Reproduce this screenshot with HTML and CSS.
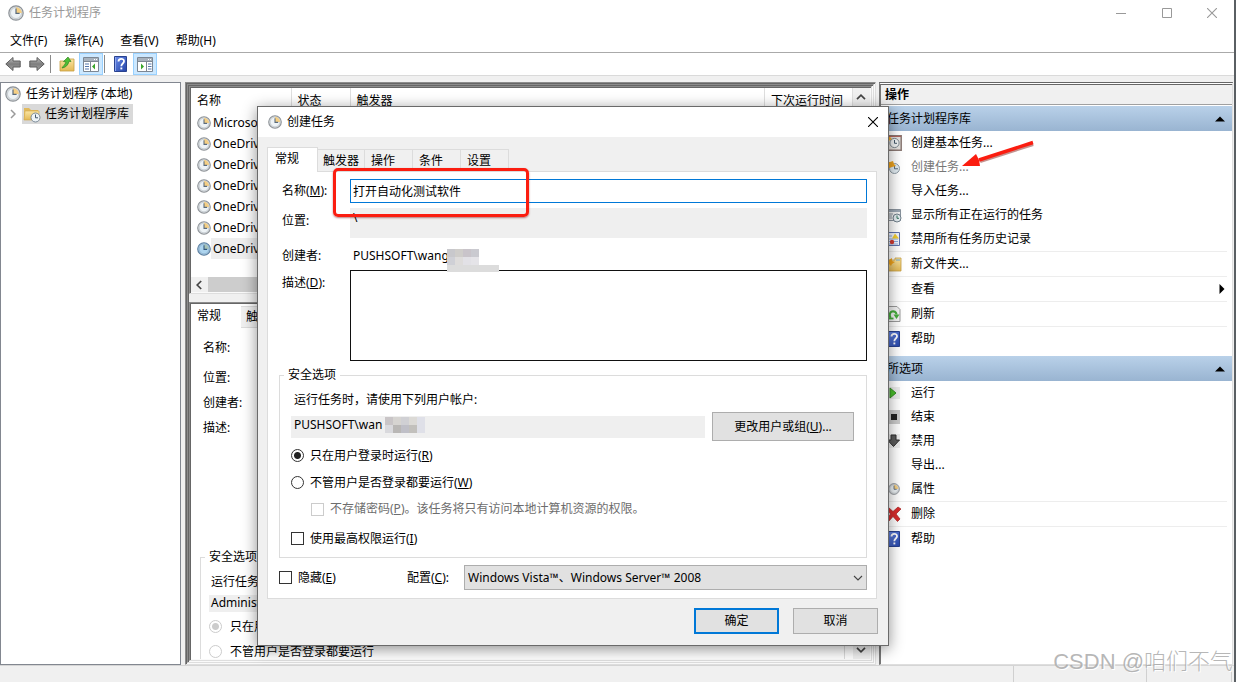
FILE: index.html
```html
<!DOCTYPE html>
<html lang="zh-CN">
<head>
<meta charset="utf-8">
<title>任务计划程序</title>
<link rel="stylesheet" href="styles.css">
</head>
<body>
<svg class="defs" aria-hidden="true">
  <defs>
    <linearGradient id="metal" x1="0" y1="0" x2="0" y2="1"><stop offset="0" stop-color="#c4c4c4"/><stop offset=".5" stop-color="#7d7d7d"/><stop offset="1" stop-color="#a8a8a8"/></linearGradient>
    <linearGradient id="gold" x1="0" y1="0" x2="0" y2="1"><stop offset="0" stop-color="#fbe6a4"/><stop offset="1" stop-color="#e3b955"/></linearGradient>
    <linearGradient id="bluebook" x1="0" y1="0" x2="1" y2="1"><stop offset="0" stop-color="#6a8bea"/><stop offset="1" stop-color="#2545a8"/></linearGradient>
    <symbol id="clock" viewBox="0 0 16 16"><circle cx="8" cy="8" r="7.2" fill="#d9dde0" stroke="#8d9297" stroke-width="1.2"/><circle cx="8" cy="8" r="5.5" fill="#eef3f6" stroke="#b3babf" stroke-width=".6"/><path d="M8 8V2.2A5.800 5.800 0 0 1 13.800 8z" fill="#f5cf84"/><path d="M8 3.6V8.4H11.6" fill="none" stroke="#5a6b7c" stroke-width="1.2"/></symbol>
    <symbol id="clock-blue" viewBox="0 0 16 16"><circle cx="8" cy="8" r="7.2" fill="#a6c5df" stroke="#5b7f9f" stroke-width="1.2"/><circle cx="8" cy="8" r="5.5" fill="#add4ee" stroke="#7fa7c6" stroke-width=".6"/><path d="M8 8V2.7A5.3 5.3 0 0 1 13.3 8z" fill="#a9c3b5"/><path d="M8 3.6V8.4H11.6" fill="none" stroke="#31577c" stroke-width="1.2"/></symbol>
    <symbol id="folder-clock" viewBox="0 0 18 18"><path d="M1 3h5l2 2h7v10H1z" fill="#e2bb5f"/><path d="M2 6h14v9H1z" fill="url(#gold)" stroke="#d0a64b" stroke-width=".6"/><circle cx="12.500" cy="12.500" r="4.500" fill="#eef4f8" stroke="#7b8a97"/><path d="M12.500 9.500v3.300h2.500" fill="none" stroke="#45596b"/></symbol>
    <symbol id="arrow" viewBox="0 0 16 16"><path d="M.8 8L8 1.500V5h7.200v6H8v3.500z" fill="url(#metal)" stroke="#5d5d5d"/></symbol>
    <symbol id="folder-up" viewBox="0 0 16 16"><path d="M1 5h6l2-2h6v12H1z" fill="url(#gold)" stroke="#c79e42" stroke-width=".8"/><path d="M3 12c1-2 3-3 4-6L4.500 5.500 9 1l3 4.500-2-.200c-1 4-3 6-7 6.700z" fill="#4fbe36" stroke="#31871f" stroke-width=".7"/></symbol>
    <symbol id="pane-left" viewBox="0 0 16 16"><path d="M.5 1.500h15v14H.5z" fill="#fff" stroke="#7c8794"/><path d="M1 2h14v3H1z" fill="#a8b2bd"/><path d="M1 5.500h14M7.500 6v9" stroke="#7c8794"/><path d="M2 8h4M2 10.500h4M2 13h4" stroke="#5477ac" stroke-width="1.200"/><path d="M12 7.500v6L9 10.500z" fill="#39a62b"/><path d="M11 3.500h1M13 3.500h1" stroke="#fff"/></symbol>
    <symbol id="pane-right" viewBox="0 0 16 16"><path d="M.5 1.500h15v14H.5z" fill="#fff" stroke="#7c8794"/><path d="M1 2h14v3H1z" fill="#a8b2bd"/><path d="M1 5.500h14M9.500 6v9" stroke="#7c8794"/><path d="M11 8h3.500M11 10.500h3.500M11 13h3.500" stroke="#5477ac" stroke-width="1.200"/><path d="M4 7.500v6l3-3z" fill="#39a62b"/><path d="M11 3.500h1M13 3.500h1" stroke="#fff"/></symbol>
    <symbol id="help" viewBox="0 0 16 16"><path d="M1.500.5h12v15h-12z" fill="url(#bluebook)" stroke="#29428f"/><path d="M2.500 1v14" stroke="#8fa8ef"/><path d="M5.500 5.500c0-3.500 5.500-3.500 5.500-.3C11 7.500 8.300 7.500 8.300 10.200" fill="none" stroke="#fff" stroke-width="1.800"/><path d="M7.400 11.500h1.900v1.900H7.400z" fill="#fff"/></symbol>
    <symbol id="basic" viewBox="0 0 16 16"><path d="M.8.8h14.400v14.400H.8z" fill="#e4e1de" stroke="#8b7974" stroke-width="1.500"/><path d="M1 1.500h14" stroke="#b0645c"/><circle cx="8.500" cy="8" r="4.600" fill="#f1f4f5" stroke="#7d8890"/><path d="M8.500 5v3.300h2.500" fill="none" stroke="#45596b"/><path d="M1 2h3l2 2-5 3z" fill="#efac2c"/></symbol>
    <symbol id="new-task" viewBox="0 0 16 16"><circle cx="8.500" cy="9.500" r="5" fill="#e3edf3" stroke="#8d9aa4"/><path d="M8.500 6v3.800H12" fill="none" stroke="#55697b"/><path d="M0 3l4 0 3-1 1 3 2 2-4 1-3 1-3-1z" fill="#f0a51f"/></symbol>
    <symbol id="running" viewBox="0 0 16 16"><path d="M.5 2.500h14v11H.5z" fill="#f1f1f1" stroke="#8a949e"/><path d="M1 3h13v2H1z" fill="#9ba7b3"/><path d="M2 7h5M2 9h4M2 11h4" stroke="#8a949e"/><circle cx="11" cy="11" r="4" fill="#e6eef2" stroke="#71808c"/><path d="M11 8.500v2.800h2" fill="none" stroke="#35765f"/></symbol>
    <symbol id="history" viewBox="0 0 16 16"><path d="M.5 1.500h13v13H.5z" fill="#f3f6fd" stroke="#6073ad"/><path d="M2 5h4M2 8h10M2 10.500h10M2 13h10" stroke="#8cabe0"/><path d="M9 2.500l4 5H6z" fill="#f3cd2d"/><circle cx="6" cy="11" r="2.200" fill="#d33b32"/></symbol>
    <symbol id="folder-new" viewBox="0 0 16 16"><path d="M1 4h8V2h6v13H1z" fill="url(#gold)" stroke="#c79e42" stroke-width=".8"/><path d="M10 4h4" stroke="#6ba9d8"/><path d="M1 2l2 2 3-2v3l3 1-3 2-1 2-2-2-3-1z" fill="#f2a51c"/></symbol>
    <symbol id="refresh" viewBox="0 0 16 16"><path d="M1 .5h10l3 3v12H1z" fill="#f4f4f4" stroke="#9b9b9b"/><path d="M4.500 12C1 5 10 3 10.500 8.500" fill="none" stroke="#46ae3c" stroke-width="2.200"/><path d="M7.500 8.500h6L10.500 13z" fill="#46ae3c"/><path d="M3 12.500h4.500" stroke="#46ae3c" stroke-width="1.800"/></symbol>
    <symbol id="run" viewBox="0 0 16 16"><path d="M1 2h13v12H1z" fill="#ececec"/><path d="M4 3v10l6-5z" fill="#4bc12c" stroke="#358f24"/></symbol>
    <symbol id="stop" viewBox="0 0 16 16"><path d="M1 1h13v14H1z" fill="#cbcbcb"/><path d="M5 5h6v6H5z" fill="#222"/></symbol>
    <symbol id="disable" viewBox="0 0 16 16"><path d="M1 1h13v14H1z" fill="#efefef"/><path d="M5 2h5v5h3.500l-6 6.500-6-6.500H5z" fill="#5d5d5d" stroke="#303030"/></symbol>
    <symbol id="delete" viewBox="0 0 16 16"><path d="M2 1l5 4.500L12 1l3 2-5 5 4 5-2.500 2.500-4.500-5-4.500 5L.5 13l4-5-4-5z" fill="#d92c2c" stroke="#a51f1f" stroke-width=".7"/></symbol>
    <symbol id="tri-up" viewBox="0 0 10 6"><path d="M0 5.500L5 .5l5 5z" fill="#000"/></symbol>
    <symbol id="tri-right" viewBox="0 0 6 10"><path d="M.5 0l5 5-5 5z" fill="#000"/></symbol>
    <symbol id="close" viewBox="0 0 10 10"><path d="M0 0l10 10M10 0L0 10" fill="none" stroke="currentColor" stroke-width="1.100"/></symbol>
    <symbol id="chev" viewBox="0 0 10 6"><path d="M1 5.200L5 1.200l4 4" fill="none" stroke="currentColor" stroke-width="1.700"/></symbol>
    <symbol id="chev-thin" viewBox="0 0 10 6"><path d="M1 1l4 4 4-4" fill="none" stroke="#444" stroke-width="1.100"/></symbol>
  </defs>
</svg>

<div class="window">
  <header class="titlebar">
    <svg class="i16"><use href="#clock"/></svg>
    <span class="title">任务计划程序</span>
    <button class="caption" aria-label="最小化"><svg width="10" height="10"><path d="M0 5.500h10" stroke="currentColor"/></svg></button>
    <button class="caption" aria-label="最大化"><svg width="10" height="10"><path d="M.5.5h9v9h-9z" fill="none" stroke="currentColor"/></svg></button>
    <button class="caption" aria-label="关闭"><svg width="10" height="10"><use href="#close"/></svg></button>
  </header>
  <nav class="menubar">
    <button>文件(F)</button><button>操作(A)</button><button>查看(V)</button><button>帮助(H)</button>
  </nav>
  <div class="toolbar">
    <button aria-label="后退"><svg class="i16"><use href="#arrow"/></svg></button>
    <button aria-label="前进"><svg class="i16 flip"><use href="#arrow"/></svg></button>
    <span class="tsep"></span>
    <button aria-label="上一级"><svg class="i16"><use href="#folder-up"/></svg></button>
    <button class="on" aria-label="显示控制台树"><svg class="i16"><use href="#pane-left"/></svg></button>
    <span class="tsep"></span>
    <button aria-label="帮助"><svg class="i16"><use href="#help"/></svg></button>
    <button class="on" aria-label="显示操作窗格"><svg class="i16"><use href="#pane-right"/></svg></button>
  </div>

  <main class="workspace">
    <aside class="tree">
      <div class="tree-row"><svg class="i16"><use href="#clock"/></svg><span>任务计划程序 (本地)</span></div>
      <div class="tree-row child"><svg class="twisty" viewBox="0 0 6 10"><path d="M1 1l4 4-4 4" fill="none" stroke="#9a9a9a" stroke-width="1.500"/></svg><span class="picked"><svg class="i18"><use href="#folder-clock"/></svg>任务计划程序库</span></div>
    </aside>

    <section class="center sunken"><div class="center-in sunken">
      <div class="list sunken">
        <div class="list-body">
          <table>
            <colgroup><col class="c-name"><col class="c-state"><col><col class="c-next"></colgroup>
            <thead><tr><th>名称</th><th>状态</th><th>触发器</th><th>下次运行时间</th></tr></thead>
            <tbody>
              <tr><td><svg class="i14"><use href="#clock"/></svg><span>Microsoft</span></td></tr>
              <tr><td><svg class="i14"><use href="#clock"/></svg><span>OneDrive</span></td></tr>
              <tr><td><svg class="i14"><use href="#clock"/></svg><span>OneDrive</span></td></tr>
              <tr><td><svg class="i14"><use href="#clock"/></svg><span>OneDrive</span></td></tr>
              <tr><td><svg class="i14"><use href="#clock"/></svg><span>OneDrive</span></td></tr>
              <tr><td><svg class="i14"><use href="#clock"/></svg><span>OneDrive</span></td></tr>
              <tr><td class="sel"><svg class="i14"><use href="#clock-blue"/></svg><span>OneDrive</span></td></tr>
            </tbody>
          </table>
          <div class="vbar"><svg class="chev"><use href="#chev"/></svg></div>
        </div>
        <div class="hbar"><svg class="chev left"><use href="#chev"/></svg><span class="thumb"></span></div>
      </div>
      <div class="detail sunken">
        <div class="tabs back-tabs"><button class="tab active">常规</button><button class="tab">触发器</button></div>
        <div class="detail-in">
          <div class="detail-form">
            <p>名称:</p><p>位置:</p><p>创建者:</p><p>描述:</p>
            <fieldset>
              <legend>安全选项</legend>
              <p>运行任务时</p>
              <p class="ro">Administrator</p>
              <label><input type="radio" name="back" disabled checked>只在用户</label>
              <label><input type="radio" name="back" disabled>不管用户是否登录都要运行</label>
            </fieldset>
          </div>
          <div class="vbar low"><svg class="chev down"><use href="#chev"/></svg></div>
        </div>
      </div>
    </div></section>

    <aside class="actions">
      <h2>操作</h2>
      <div class="group"><span>任务计划程序库</span><svg class="tri"><use href="#tri-up"/></svg></div>
      <ul>
        <li><svg class="i16"><use href="#basic"/></svg>创建基本任务...</li>
        <li class="dim"><svg class="i16"><use href="#new-task"/></svg>创建任务...</li>
        <li><span class="i16"></span>导入任务...</li>
        <li><svg class="i16"><use href="#running"/></svg>显示所有正在运行的任务</li>
        <li><svg class="i16"><use href="#history"/></svg>禁用所有任务历史记录</li>
        <li class="line"><svg class="i16"><use href="#folder-new"/></svg>新文件夹...</li>
        <li class="line"><span class="i16"></span>查看<svg class="more"><use href="#tri-right"/></svg></li>
        <li class="line"><svg class="i16"><use href="#refresh"/></svg>刷新</li>
        <li class="line"><svg class="i16"><use href="#help"/></svg>帮助</li>
      </ul>
      <div class="group"><span>所选项</span><svg class="tri"><use href="#tri-up"/></svg></div>
      <ul>
        <li><svg class="i16"><use href="#run"/></svg>运行</li>
        <li><svg class="i16"><use href="#stop"/></svg>结束</li>
        <li><svg class="i16"><use href="#disable"/></svg>禁用</li>
        <li><span class="i16"></span>导出...</li>
        <li><svg class="i16 small"><use href="#clock"/></svg>属性</li>
        <li class="line"><svg class="i16"><use href="#delete"/></svg>删除</li>
        <li class="line"><svg class="i16"><use href="#help"/></svg>帮助</li>
      </ul>
    </aside>
  </main>
  <footer class="status"><span></span><span></span><span></span></footer>
</div>

<div class="dialog" role="dialog" aria-labelledby="dlg-title">
  <header class="dlg-title">
    <svg class="i14"><use href="#clock"/></svg><span id="dlg-title">创建任务</span>
    <button aria-label="关闭"><svg width="10" height="10"><use href="#close"/></svg></button>
  </header>
  <div class="dlg-body">
    <div class="tabs"><button class="tab active">常规</button><button class="tab">触发器</button><button class="tab">操作</button><button class="tab">条件</button><button class="tab">设置</button></div>
    <form class="page">
      <div class="fields">
        <label for="name">名称(<u>M</u>):</label><input class="name" id="name" value="打开自动化测试软件">
        <span>位置:</span><div class="loc">\</div>
        <span class="low-label">创建者:</span><div class="creator">PUSHSOFT\wang<i class="mosaic wide"></i></div>
        <label class="top" for="desc">描述(<u>D</u>):</label><textarea id="desc"></textarea>
      </div>
      <fieldset class="security">
        <legend>安全选项</legend>
        <p>运行任务时，请使用下列用户帐户:</p>
        <div class="account"><div class="acct">PUSHSOFT\wan<i class="mosaic"></i></div><button type="button" class="btn">更改用户或组(<u>U</u>)...</button></div>
        <label class="opt"><input type="radio" name="when" checked>只在用户登录时运行(<u>R</u>)</label>
        <label class="opt"><input type="radio" name="when">不管用户是否登录都要运行(<u>W</u>)</label>
        <label class="opt sub"><input type="checkbox" disabled>不存储密码(<u>P</u>)。该任务将只有访问本地计算机资源的权限。</label>
        <label class="opt last"><input type="checkbox">使用最高权限运行(<u>I</u>)</label>
      </fieldset>
      <div class="bottom">
        <label class="opt"><input type="checkbox">隐藏(<u>E</u>)</label>
        <label class="conf" for="conf">配置(<u>C</u>):</label>
        <div class="combo"><select id="conf"><option>Windows Vista™、Windows Server™ 2008</option></select><svg class="chev"><use href="#chev-thin"/></svg></div>
      </div>
    </form>
    <div class="buttons"><button class="btn primary">确定</button><button class="btn">取消</button></div>
  </div>
  <div class="callout"></div>
</div>

<svg class="pointer" viewBox="0 0 74 30"><path d="M72 3L19 20" stroke="#8d2a22" stroke-width="4" opacity=".5" transform="translate(0 1)"/><path d="M72 2.500L18 20" stroke="#fb1d10" stroke-width="3.500"/><path d="M1 26L15 14l3 6 1 6z" fill="#fb1d10"/></svg>
<div class="watermark">CSDN @咱们不气</div>
</body>
</html>
```

FILE: styles.css
```css
* { box-sizing: border-box; }
body {
  margin: 0;
  overflow: hidden;
  font: 12px/16px "Noto Sans", "Noto Sans CJK SC", sans-serif;
  color: #000;
  background: #fff;
}
button, input, select, textarea { font: inherit; color: inherit; margin: 0; }
button { padding: 0; border: 0; background: none; }
p, h2, ul, fieldset { margin: 0; padding: 0; }
svg { display: block; flex: none; }
.defs { position: absolute; width: 0; height: 0; }
.i14 { width: 14px; height: 14px; flex: none; }
.i16 { width: 16px; height: 16px; flex: none; }
.i18 { width: 18px; height: 18px; }
.flip { transform: scaleX(-1); }
.chev { width: 10px; height: 6px; color: #444; }
.chev.left { transform: rotate(-90deg); }
.chev.down { transform: rotate(180deg); }

/* main window */
.window { display: flex; flex-direction: column; height: 100vh; border-right: 2px solid #5a5f63; background: #fff; }
.titlebar { display: flex; align-items: center; height: 27px; padding: 0 0 1px 8px; color: #999; }
.title { flex: 1; margin-left: 5px; }
.caption { display: grid; place-items: center; width: 46px; height: 26px; }
.caption + .caption { width: 45px; }
.menubar { display: flex; gap: 17px; height: 26px; padding: 3px 10px 0; align-items: center; border-bottom: 1px solid #aaa; }
.toolbar { display: flex; align-items: center; height: 23px; padding-left: 1px; border-bottom: 1px solid #dadada; }
.toolbar button { display: grid; place-items: center; width: 24px; height: 22px; }
.toolbar .on { background: #cce8ff; border: 1px solid #99d1ff; }
.tsep { width: 1px; height: 18px; margin: 0 4px 0 1px; background: #8a8a8a; }
.workspace { flex: 1; display: flex; min-height: 0; padding: 6px 1px 0 0; background: #f0f0f0; }

.tree { width: 181px; border: 1px solid #828790; background: #fff; padding: 1px 4px; }
.tree-row { display: flex; align-items: center; gap: 5px; height: 20px; }
.child { padding-left: 5px; gap: 6px; }
.twisty { width: 6px; height: 10px; }
.picked { display: flex; align-items: center; gap: 4px; height: 20px; padding: 0 4px 0 1px; background: #d9d9d9; }

.sunken {
  padding: 1px;
  border: 1px solid;
  border-color: #8c8c8c #dedede #dedede #8c8c8c;
  box-shadow: inset 1px 1px #666, inset -1px -1px #fafafa;
}
.center { flex: 1; margin-left: 4px; min-width: 0; }
.center-in { display: flex; flex-direction: column; height: 100%; background: #f0f0f0; }
.list { display: flex; flex-direction: column; height: 208px; background: #fff; }
.list-body { display: flex; flex: 1; min-height: 0; }
.list table { flex: 1; height: 171px; table-layout: fixed; border-collapse: collapse; }
.c-name { width: 100px; }
.c-state { width: 59px; }
.c-next { width: 88px; }
th { height: 24px; padding: 2px 0 0 6px; text-align: left; font-weight: 400; border-right: 1px solid #dedede; white-space: nowrap; }
td { height: 21px; padding: 0 0 0 6px; }
td svg, td span { display: inline-block; vertical-align: middle; }
td span { margin-left: 2px; }
.sel { background: linear-gradient(90deg, #fff 20px, #eee 20px); }
.vbar { width: 17px; padding: 6px 3px; background: #f0f0f0; }
.hbar { display: flex; align-items: center; height: 15px; padding-left: 3px; background: #f0f0f0; }
.thumb { flex: 1; height: 15px; margin: 0 20px 0 4px; background: #cdcdcd; }
.detail { display: flex; flex-direction: column; flex: 1; min-height: 0; margin-top: 8px; background: #fff; }
.detail-in { display: flex; flex: 1; min-height: 0; }
.detail-form { flex: 1; min-width: 0; overflow: hidden; padding: 7px 8px 0 9px; }
.detail-form > p { height: 25px; margin-left: 3px; line-height: 25px; }
.detail-form > p:first-child { margin-bottom: 5px; }
.detail-form fieldset { margin-top: 109px; padding: 9px 8px; border: 1px solid #dcdcdc; height: 160px; }
.detail-form legend { margin-left: -4px; padding: 0 4px; line-height: 16px; }
.detail-form fieldset p { height: 21px; line-height: 16px; padding-left: 2px; }
.detail-form fieldset .ro { background: #efefef; line-height: 16px; height: 17px; }
.detail-form label { display: flex; align-items: center; gap: 8px; height: 25px; margin-top: 2px; }
.detail-form label + label { margin-top: 0; }
.vbar.low { display: flex; align-items: flex-end; }

/* tab strips */
.tabs { display: flex; align-items: flex-end; }
.tab { height: 22px; padding: 0 6px; text-align: left; background: #f0f0f0; border: 1px solid #dcdcdc; border-left: 0; border-bottom: 0; white-space: nowrap; }
.tab.active { position: relative; width: 51px; height: 25px; padding: 0 7px 2px; background: #fff; border-left: 1px solid #dcdcdc; margin-bottom: -1px; }
.back-tabs .tab { padding-left: 5px; border-bottom: 1px solid #dcdcdc; }
.back-tabs .tab.active { width: 50px; border: 0; padding-left: 6px; }

/* actions pane */
.actions { width: 354px; margin-left: 3px; border: 1px solid #8c8c8c; border-top: 3px double #666; border-left: 2px solid #777; border-right-color: #dedede; border-bottom-color: #dedede; background: #fff; }
.actions h2 { height: 20px; padding-left: 4px; font-size: 12px; line-height: 19px; font-weight: 700; background: #f0f0f0; border-bottom: 1px solid #a0a0a0; }
.group { display: flex; align-items: center; justify-content: space-between; height: 25px; margin-top: 1px; padding: 0 7px 0 6px; background: linear-gradient(#b9d1e9, #99b4d1); }
.tri { width: 10px; height: 6px; }
.actions ul { list-style: none; margin: 0 5px 5px 0; }
.actions li { display: flex; align-items: center; gap: 9px; height: 24px; padding-left: 5px; }
.actions .line { height: 25px; border-top: 1px solid #ededed; }
.actions .dim { color: #777; }
.actions .small { padding: 2px; }
.more { width: 6px; height: 10px; margin: 0 2px 0 auto; }
.status { display: flex; justify-content: flex-end; height: 17px; background: #f0f0f0; border-top: 1px solid #d5d5d5; }
.status span { width: 133px; border-left: 1px solid #d0d0d0; }
.status span:nth-child(2) { width: 85px; }
.status span:last-child { width: 3px; }

/* dialog window */
.dialog { position: absolute; left: 257px; top: 106px; width: 632px; background: #f0f0f0; border: 1px solid #6a6a6a; box-shadow: 0 3px 14px rgba(0,0,0,.45); }
.dlg-title { display: flex; align-items: center; height: 30px; padding: 0 10px; background: #fff; }
.dlg-title span { flex: 1; margin-left: 5px; }
.dlg-title button { padding: 5px; margin-right: -5px; }
.dlg-body { padding: 10px 9px 11px; }
.dlg-body .tab { width: 48px; }
.dlg-body .tab:nth-child(2) { width: 47px; padding-left: 5px; }
.dlg-body .tab.active { width: 51px; padding-bottom: 3px; }
.page { margin-right: 2px; padding: 7px 9px 8px 11px; background: #fff; border: 1px solid #dcdcdc; }
.fields { display: grid; grid-template-columns: 68px 1fr; align-items: center; padding-left: 3px; }
.fields > :nth-child(odd) { white-space: nowrap; }
.name { height: 24px; padding: 0 2px; border: 1px solid #0078d7; background: #fff; width: 100%; outline: 0; }
.loc { height: 30px; margin-top: 5px; padding: 2px 3px; background: #efefef; }
.creator { position: relative; height: 32px; padding: 0 3px; line-height: 35px; }
.low-label { padding-top: 4px; }
.top { align-self: start; margin-top: 5px; }
textarea { display: block; width: 100%; height: 91px; resize: none; border: 1px solid #111; outline: 0; background: #fff; }
.mosaic {
  position: absolute; left: 94px; top: 1px; width: 40px; height: 16px;
  background:
    linear-gradient(90deg, #c9c5c7 8px, #d6d4d1 8px 16px, #d0d0d4 16px 24px, #dcdad6 24px 32px, #dfe0e8 32px) top / 40px 8px no-repeat,
    linear-gradient(90deg, #d9d9dd 8px, #b9b7b5 8px 16px, #bfbfc7 16px 24px, #c2c0bc 24px 32px, #dfe0e8 32px) bottom / 40px 8px no-repeat;
}
.mosaic.wide {
  left: 97px; top: 11px; width: 32px;
  background:
    linear-gradient(90deg, #c8c8cc 8px, #cfcdca 8px 16px, #c9c4ca 16px 24px, #cacad0 24px) top / 32px 8px no-repeat,
    linear-gradient(90deg, #cfd0d6 8px, #dedcdb 8px 16px, #e2e1e6 16px 24px, #e5e4e8 24px) bottom / 32px 8px no-repeat;
}
.mosaic.wide::after { content: ""; position: absolute; left: 0; top: 16px; width: 52px; height: 7px; background: #dcdcdc; }
.security { margin-top: 6px; padding: 9px 12px 2px 11px; border: 1px solid #dcdcdc; }
.security legend { margin-left: -7px; padding: 0 4px; line-height: 16px; }
.security p { padding-left: 3px; }
.account { display: flex; align-items: center; gap: 7px; margin: 4px 0 1px; }
.acct { position: relative; flex: 1; height: 22px; padding: 0 3px; line-height: 18px; background: #efefef; }
.btn { height: 26px; width: 85px; background: #e1e1e1; border: 1px solid #adadad; }
.account .btn { height: 29px; width: 142px; }
.btn.primary { border: 2px solid #0078d7; }
.opt { display: flex; align-items: center; height: 27px; white-space: nowrap; }
.opt input, .detail-form input { appearance: none; flex: none; width: 13px; height: 13px; margin: 0; border: 1px solid #333; background: #fff; }
.opt input { margin-right: 6px; }
.opt input[type="radio"], .detail-form input { border-radius: 50%; }
.opt input[type="radio"]:checked { background: radial-gradient(circle, #222 3px, #fff 4px); }
.detail-form input:disabled, .opt input:disabled { border-color: #ccc; }
.detail-form input:checked { background: radial-gradient(circle, #ccc 3px, #fff 4px); }
.opt.sub { margin-left: 20px; height: 26px; color: #6d6d6d; }
.opt.last { height: 33px; }
.bottom { display: flex; align-items: center; height: 25px; margin-top: 7px; }
.bottom .opt { width: 128px; }
.conf { width: 57px; }
.combo { position: relative; flex: 1; }
select { display: block; appearance: none; width: 100%; height: 25px; padding: 0 3px; background: #e1e1e1; border: 1px solid #adadad; border-radius: 0; }
.combo .chev { position: absolute; right: 4px; top: 10px; }
.buttons { display: flex; justify-content: flex-end; gap: 14px; margin-top: 9px; padding-right: 1px; }

/* annotations laid over the windows */
.callout { position: absolute; left: 75px; top: 61px; width: 196px; height: 49px; border: 3px solid #fb1d10; border-radius: 5px; box-shadow: 0 1px 2px rgba(120,0,0,.5); }
.pointer { position: absolute; left: 961px; top: 140px; width: 74px; height: 30px; }
.watermark { position: absolute; right: 4px; bottom: 5px; font: 300 22px/30px "Liberation Sans", "Noto Sans CJK SC", sans-serif; color: rgba(160,160,160,.75); text-shadow: 1px 1px #fff; white-space: nowrap; }
```
